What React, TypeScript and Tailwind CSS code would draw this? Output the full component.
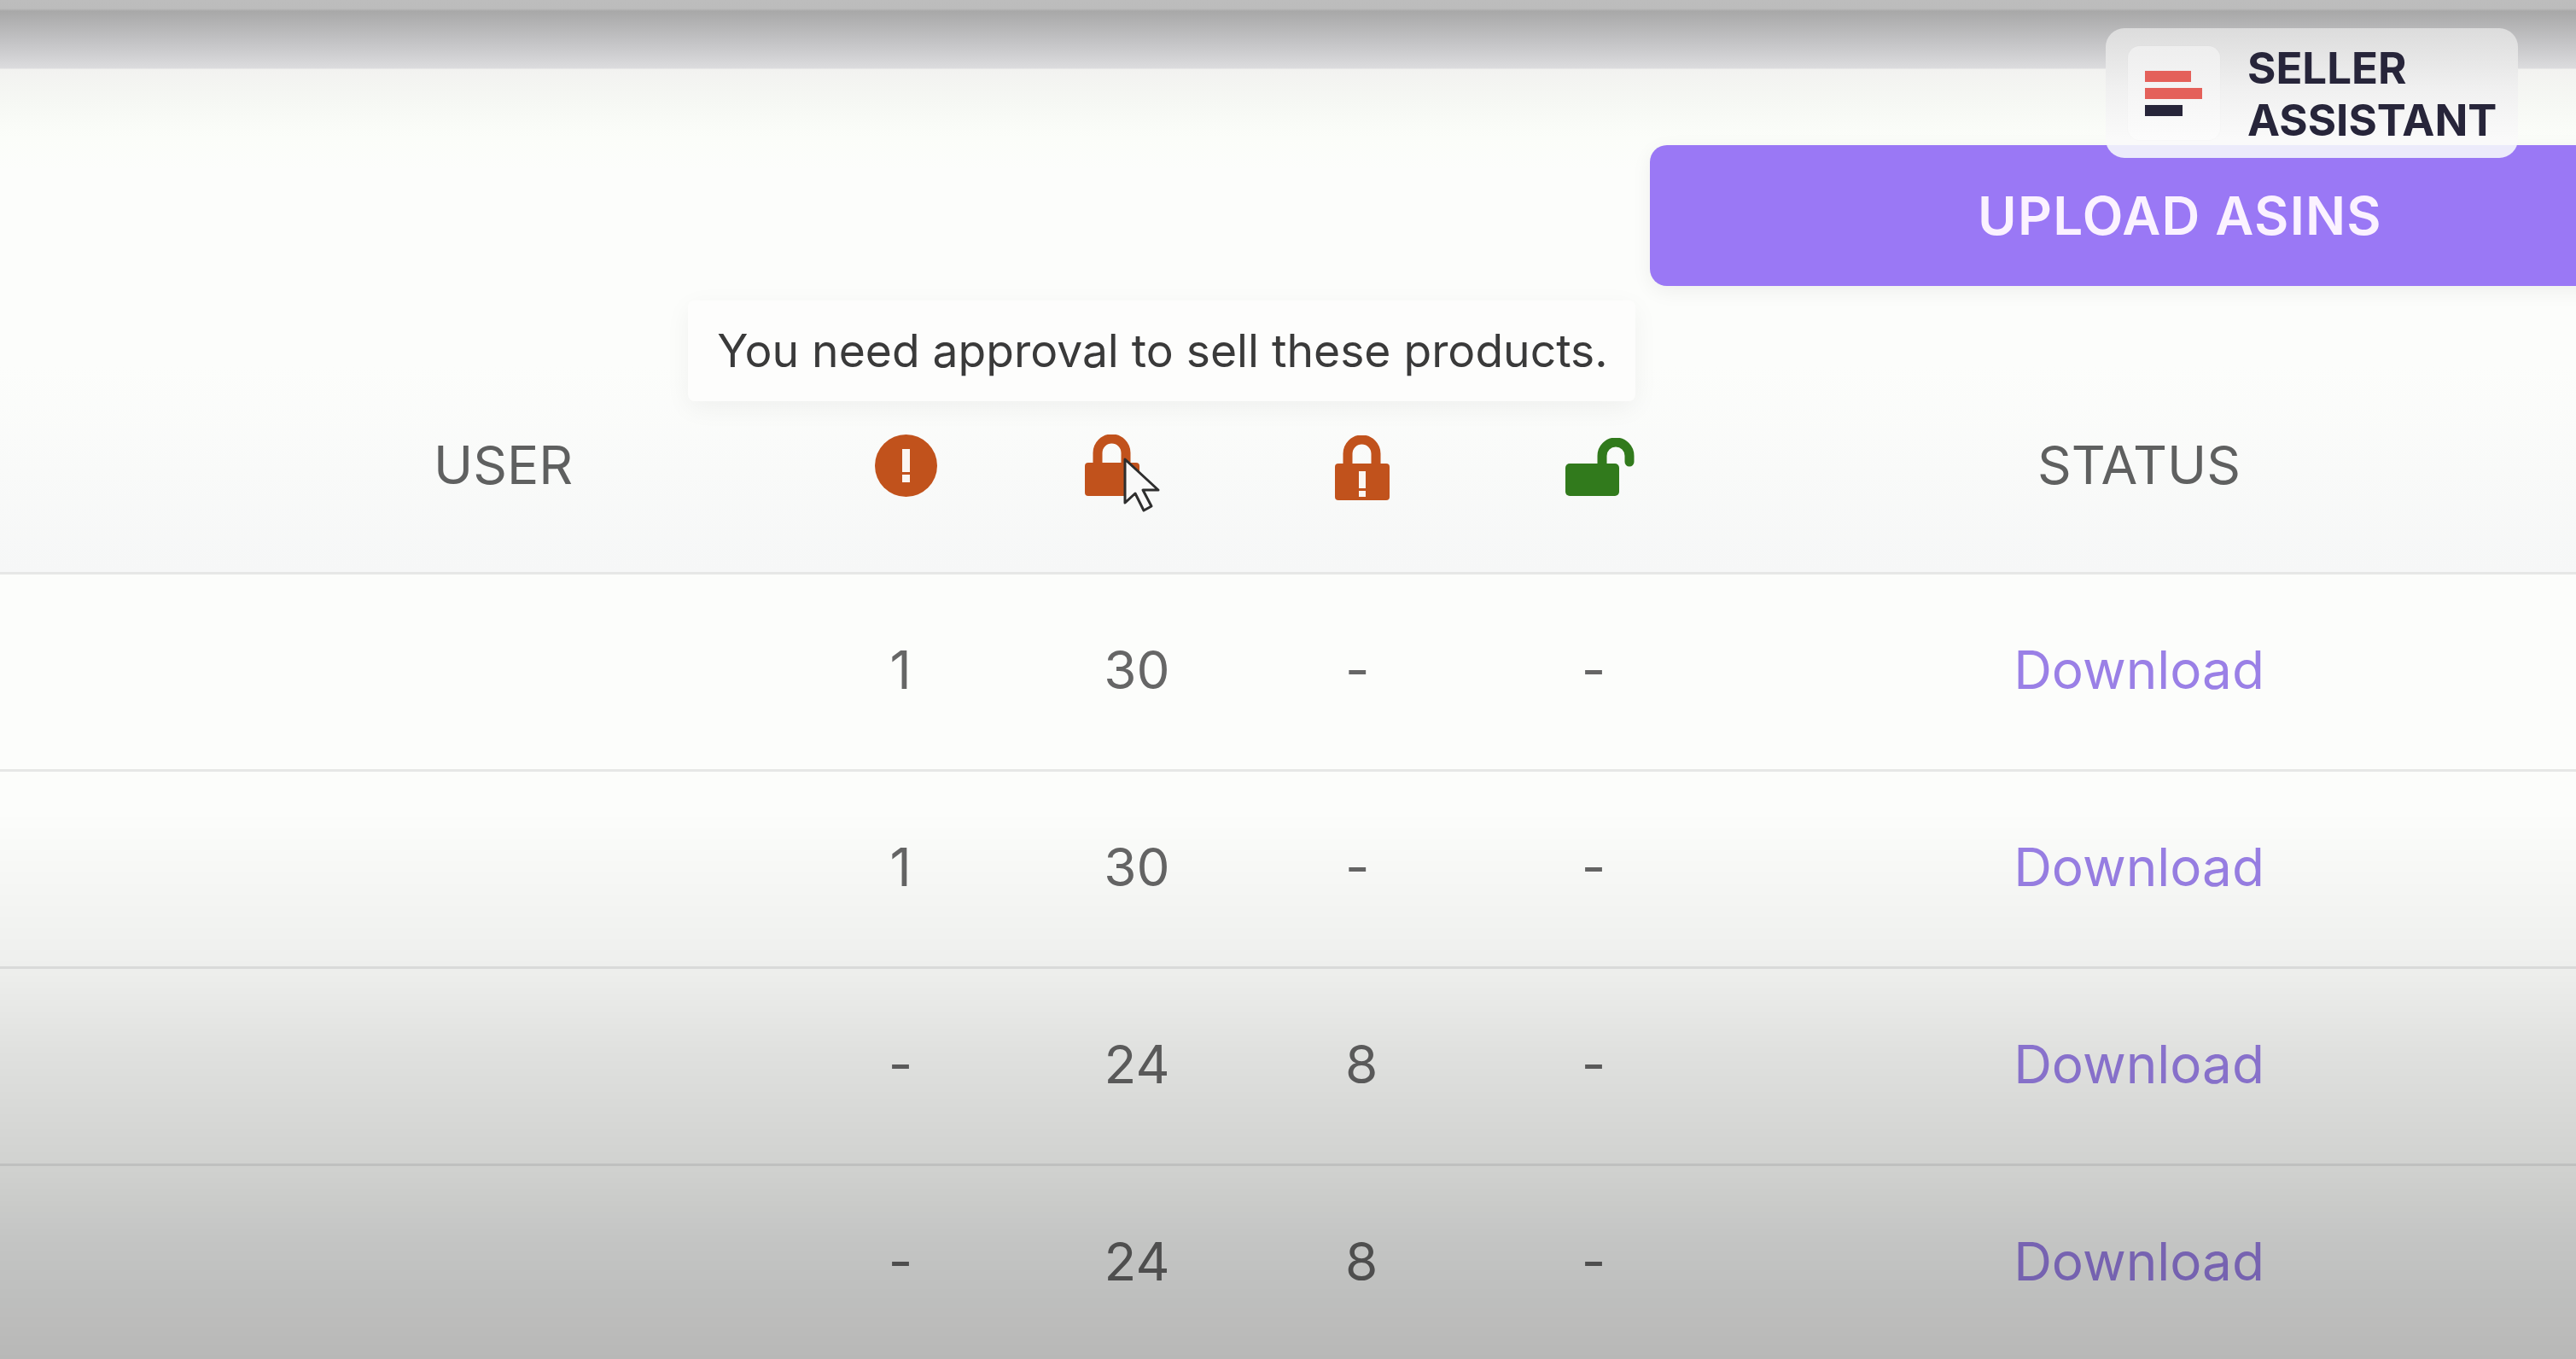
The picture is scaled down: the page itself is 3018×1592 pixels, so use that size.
import React from "react";

const rows = [
  { a: "1", b: "30", c: "-", d: "-" },
  { a: "1", b: "30", c: "-", d: "-" },
  { a: "-", b: "24", c: "8", d: "-" },
  { a: "-", b: "24", c: "8", d: "-" },
];

const gridCols = "grid grid-cols-[940px_230px_324px_192px_362px_916px_54px]";

function AlertIcon() {
  return (
    <svg width="73" height="73" viewBox="0 0 73 73">
      <circle cx="36.5" cy="36.5" r="36.5" fill="#c1521c" />
      <rect x="32" y="17" width="9" height="27" fill="#fbf6f2" />
      <rect x="32" y="47" width="9" height="9" fill="#fbf6f2" />
    </svg>
  );
}

function LockIcon({ alert = false }: { alert?: boolean }) {
  return (
    <svg width="64" height="76" viewBox="0 0 64 76">
      <path d="M15 36V21.500A16.500 16.500 0 0 1 48 21.500V36" fill="none" stroke="#c1521c" strokeWidth="11" />
      <rect x="0" y="33" width="64" height={alert ? 43 : 39} rx="4" fill="#c1521c" />
      {alert && (
        <>
          <rect x="28" y="42" width="8" height="20" fill="#fbf6f2" />
          <rect x="28" y="65" width="8" height="7" fill="#fbf6f2" />
        </>
      )}
    </svg>
  );
}

function UnlockIcon() {
  return (
    <svg width="82" height="70" viewBox="0 0 82 70">
      <path d="M43 34V21A16 16 0 0 1 75 21V28" fill="none" stroke="#317a1c" strokeWidth="11" strokeLinecap="round" />
      <rect x="0" y="30" width="63" height="38" rx="5" fill="#317a1c" />
    </svg>
  );
}

function Cursor() {
  return (
    <svg className="absolute left-[1315px] top-[535px]" width="46" height="66" viewBox="0 0 46 66">
      <path d="M3 3L3 54L15 43L25 63L34 58L24 39L42 39Z" fill="#f9f9f9" stroke="#2e2e2e" strokeWidth="3" strokeLinejoin="round" />
    </svg>
  );
}

export default function App() {
  return (
    <div className="relative w-[3018px] h-[1592px] overflow-hidden font-[Inter,sans-serif] bg-[linear-gradient(180deg,#bdbdbd_0px,#bcbcbc_10px,#a8a8a8_13px,#c4c4c6_50px,#dcdcde_80px,#f2f2f0_81px,#f6f8f4_120px,#fbfdf9_160px,#fcfdfb_200px)]">
      {/* Upload button, runs off the right edge */}
      <div className="pt-[170px] pl-[1933px]">
        <button className="w-[1242px] h-[165px] rounded-[20px] bg-[#9a78f5] text-[#fbf2ff] text-[62px] font-semibold tracking-[0.02em] shadow-[0_6px_24px_rgba(0,0,0,0.06)]">
          <span className="blur-[0.6px]">UPLOAD ASINS</span>
        </button>
      </div>

      {/* Table */}
      <div className="mt-[95px] blur-[0.6px]">
        <div className={`${gridCols} h-[243px] items-center pb-[12px] border-b-[3px] border-[#e6e7e6] bg-gradient-to-b from-[#fcfdfb] to-[#f6f7f7] text-[62px] text-[#5f6060]`}>
          <div className="pl-[508px]">USER</div>
          <div className="flex justify-center pl-[12px] pt-[2px]"><AlertIcon /></div>
          <div className="flex justify-center pr-[58px] pt-[6px]"><LockIcon /></div>
          <div className="flex justify-center pl-[12px] pt-[7px]"><LockIcon alert /></div>
          <div className="flex justify-center pl-[16px] pt-[7px]"><UnlockIcon /></div>
          <div className="text-center">STATUS</div>
          <div />
        </div>
        {rows.map((row, i) => (
          <div key={i} className={`${gridCols} h-[231px] items-center pb-[5px] border-b-[3px] border-[#e6e7e6] text-[62px] text-center text-[#666666]`}>
            <div />
            <div>{row.a}</div>
            <div>{row.b}</div>
            <div className="text-left pl-[82px]">{row.c}</div>
            <div>{row.d}</div>
            <div className="text-[#9a80e6]">Download</div>
            <div />
          </div>
        ))}
      </div>

      {/* Tooltip */}
      <div className="absolute left-[806px] top-[352px] w-[1110px] h-[118px] flex items-center justify-center pl-[2px] rounded-[8px] bg-[#fdfdfc] text-[53.4px] text-[#3a3a3a] shadow-[0_8px_30px_rgba(0,0,0,0.05)]">
        <span className="blur-[0.5px]">You need approval to sell these products.</span>
      </div>

      <Cursor />

      {/* Seller Assistant badge */}
      <div className="absolute left-[2467px] top-[33px] w-[483px] h-[152px] flex items-center gap-[32px] pl-[26px] rounded-[22px] bg-[linear-gradient(180deg,#dcdcdc_0px,#f0f0f0_70px,#fafafa_130px,#fafafa_137px,#ecebfb_137px,#ecebfb_100%)]">
        <div className="w-[108px] h-[110px] flex flex-col justify-center gap-[7px] pl-[20px] rounded-[14px] bg-gradient-to-b from-[#eeeeee] to-[#fcfcfc] shadow-[0_0_2px_rgba(0,0,0,0.04)]">
          <div className="w-[54px] h-[13px] bg-[#e4605a]" />
          <div className="w-[67px] h-[13px] bg-[#e4605a]" />
          <div className="w-[44px] h-[13px] bg-[#27253a]" />
        </div>
        <div className="pt-[1px] text-[51px] leading-[61px] font-bold text-[#27253a]">
          SELLER
          <br />
          ASSISTANT
        </div>
      </div>

      {/* Video vignette towards the bottom */}
      <div className="absolute inset-0 pointer-events-none bg-[linear-gradient(180deg,rgba(0,0,0,0)_950px,rgba(0,0,0,0.055)_1133px,rgba(0,0,0,0.11)_1230px,rgba(0,0,0,0.17)_1363px,rgba(0,0,0,0.22)_1450px,rgba(0,0,0,0.27)_1592px)]" />
    </div>
  );
}
